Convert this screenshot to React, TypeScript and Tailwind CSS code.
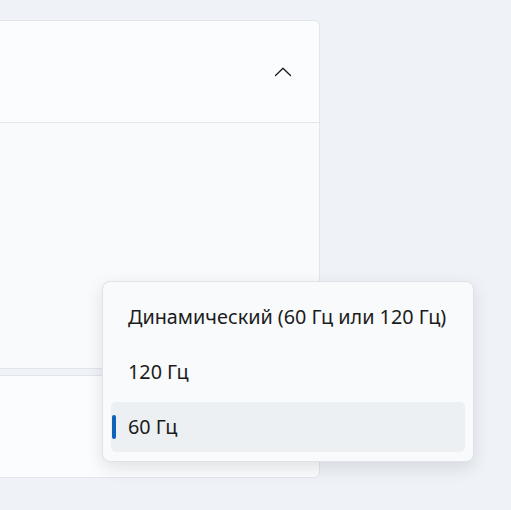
import React from "react";

const options = [
  { label: "Динамический (60 Гц или 120 Гц)", selected: false },
  { label: "120 Гц", selected: false },
  { label: "60 Гц", selected: true },
];

function ChevronUp() {
  return (
    <svg width="18" height="12" viewBox="0 0 18 12" fill="none">
      <path
        d="M1.5 9.5L9 2.2l7.5 7.3"
        stroke="#1b1b1b"
        strokeWidth={1.3}
        strokeLinecap="round"
        strokeLinejoin="round"
      />
    </svg>
  );
}

export default function App() {
  return (
    <div
      className="relative h-[510px] w-[511px] overflow-hidden bg-[#eff3f8]"
      style={{ fontFamily: '"Noto Sans", "Open Sans", sans-serif' }}
    >
      <div className="-ml-[10px] flex w-[330px] flex-col gap-[6px] pt-[20px]">
        {/* expander */}
        <div className="flex flex-col rounded-[6px] border border-[#e2e5e9] bg-[#fbfcfe]">
          <div className="flex h-[102px] items-center justify-end border-b border-[#e2e5e9] pr-[27px]">
            <ChevronUp />
          </div>
          <div className="h-[245px] bg-[#f9fafc]" />
        </div>
        {/* next card */}
        <div className="h-[103px] rounded-[6px] border border-[#e2e5e9] bg-[#fbfcfe]" />
      </div>

      {/* dropdown popup */}
      <div className="absolute left-[102px] top-[281px] flex w-[372px] flex-col gap-[5px] rounded-[8px] border border-[#dfe2e6] bg-[#f8fafc] px-[8px] pb-[9px] pt-[10px] shadow-[0_6px_18px_rgba(0,0,0,0.11)]">
        {options.map((o) => (
          <div
            key={o.label}
            className={`relative flex h-[50px] items-center rounded-[5px] pl-[17px] text-[19.8px] text-[#1c1c1c] ${
              o.selected ? "bg-[#edf0f3]" : ""
            }`}
          >
            {o.selected && (
              <span className="absolute left-[1px] top-[13px] h-[24px] w-[4px] rounded-full bg-[#0f64b8]" />
            )}
            {o.label}
          </div>
        ))}
      </div>
    </div>
  );
}
